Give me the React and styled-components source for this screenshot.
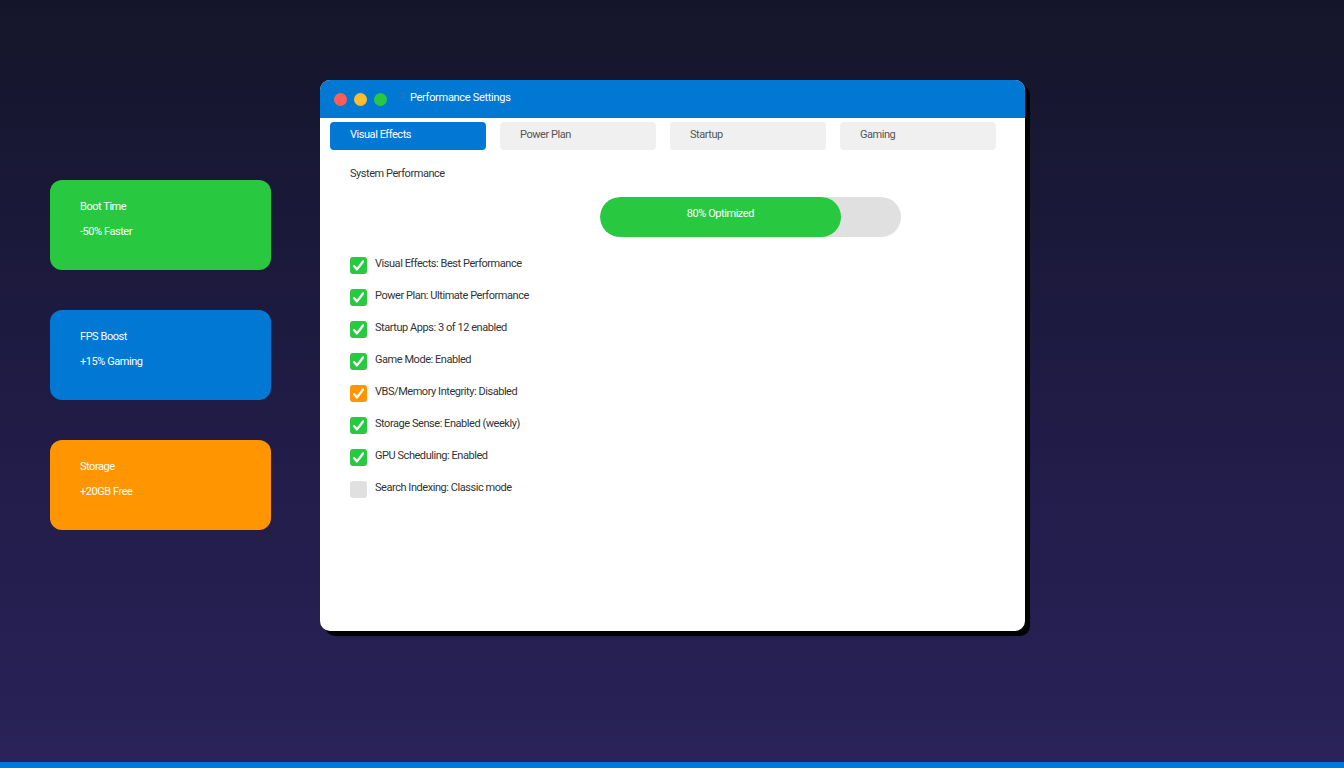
import React from "react"
import styled, { createGlobalStyle } from "styled-components"

const GlobalStyle = createGlobalStyle`
  html, body { margin: 0; padding: 0; }
  body {
    font-family: Roboto, "Liberation Sans", sans-serif;
    background: #16152b;
    -webkit-font-smoothing: antialiased;
  }
`

const Page = styled.div`
  position: relative;
  width: 1344px;
  height: 768px;
  overflow: hidden;
  background: linear-gradient(180deg, #15152a 0%, #1f1b44 50%, #2a2259 100%);
  display: flex;
  align-items: flex-start;
  box-sizing: border-box;
  padding: 80px 0 0 50px;
  letter-spacing: -0.45px;
`

const BottomBar = styled.div`
  position: absolute;
  left: 0;
  right: 0;
  bottom: 0;
  height: 6px;
  background: #0078d4;
`

const StatColumn = styled.div`
  display: flex;
  flex-direction: column;
  gap: 40px;
  margin-top: 100px;
  width: 221px;
`

const StatCard = styled.div`
  height: 90px;
  border-radius: 12px;
  background: ${p => p.$color};
  color: #fff;
  box-sizing: border-box;
  padding: 20px 30px;
  font-size: 11px;
  display: flex;
  flex-direction: column;
  gap: 12px;
`

const Window = styled.div`
  margin-left: 49px;
  width: 705px;
  height: 551px;
  background: #fff;
  border-radius: 10px;
  box-shadow: 5px 5px 0 #000;
  overflow: hidden;
  display: flex;
  flex-direction: column;
`

const TitleBar = styled.div`
  height: 38px;
  background: #0078d4;
  display: flex;
  align-items: center;
  padding-left: 14px;
  color: #fff;
  font-size: 11px;
`

const Dot = styled.span`
  width: 13px;
  height: 13px;
  border-radius: 50%;
  background: ${p => p.$color};
  margin-right: 7px;
`

const Title = styled.span`
  margin-left: 16px;
  margin-top: -4px;
  letter-spacing: -0.3px;
`

const Tabs = styled.div`
  display: flex;
  gap: 14px;
  padding: 4px 10px 0;
`

const Tab = styled.div`
  width: 156px;
  height: 28px;
  box-sizing: border-box;
  border-radius: 4px;
  padding-left: 20px;
  display: flex;
  align-items: center;
  padding-bottom: 4px;
  font-size: 11px;
  background: ${p => (p.$active ? "#0078d4" : "#f0f0f0")};
  color: ${p => (p.$active ? "#fff" : "#555")};
`

const Content = styled.div`
  padding: 16px 30px 0;
  color: #333;
  font-size: 11px;
`

const SectionTitle = styled.div`
  height: 14px;
  line-height: 14px;
  margin-top: 1px;
`

const Progress = styled.div`
  margin: 16px 0 0 250px;
  width: 301px;
  height: 40px;
  border-radius: 20px;
  background: #e0e0e0;
  overflow: hidden;
`

const ProgressFill = styled.div`
  height: 100%;
  border-radius: 20px;
  background: #28c940;
  color: #fff;
  display: flex;
  align-items: center;
  justify-content: center;
  padding-bottom: 8px;
  box-sizing: border-box;
`

const CheckList = styled.div`
  display: flex;
  flex-direction: column;
  gap: 15px;
  margin-top: 20px;
`

const CheckRow = styled.div`
  display: flex;
  align-items: center;
  gap: 8px;
  height: 17px;
`

const Box = styled.span`
  width: 17px;
  height: 17px;
  border-radius: 3px;
  background: ${p => p.$color};
  display: flex;
  align-items: center;
  justify-content: center;
  flex-shrink: 0;
`

const Label = styled.span`
  margin-top: -5px;
`

const Check = () => (
  <svg width="13" height="13" viewBox="0 0 13 13">
    <path d="M2 7 L5 10.5 L11 2.5" fill="none" stroke="#fff" strokeWidth="2.2" strokeLinecap="round" strokeLinejoin="round" />
  </svg>
)

const stats = [
  { title: "Boot Time", value: "-50% Faster", color: "#28c940" },
  { title: "FPS Boost", value: "+15% Gaming", color: "#0078d4" },
  { title: "Storage", value: "+20GB Free", color: "#ff9500" },
]

const tabs = ["Visual Effects", "Power Plan", "Startup", "Gaming"]

const items = [
  { label: "Visual Effects: Best Performance", state: "on" },
  { label: "Power Plan: Ultimate Performance", state: "on" },
  { label: "Startup Apps: 3 of 12 enabled", state: "on" },
  { label: "Game Mode: Enabled", state: "on" },
  { label: "VBS/Memory Integrity: Disabled", state: "warn" },
  { label: "Storage Sense: Enabled (weekly)", state: "on" },
  { label: "GPU Scheduling: Enabled", state: "on" },
  { label: "Search Indexing: Classic mode", state: "off" },
]

const boxColors = { on: "#28c940", warn: "#ff9500", off: "#e0e0e0" }

export default function App() {
  const optimized = 80
  return (
    <>
      <GlobalStyle />
      <Page>
        <StatColumn>
          {stats.map(s => (
            <StatCard key={s.title} $color={s.color}>
              <span>{s.title}</span>
              <span>{s.value}</span>
            </StatCard>
          ))}
        </StatColumn>

        <Window>
          <TitleBar>
            <Dot $color="#ff5f57" />
            <Dot $color="#ffbd2e" />
            <Dot $color="#28c940" />
            <Title>Performance Settings</Title>
          </TitleBar>
          <Tabs>
            {tabs.map((t, i) => (
              <Tab key={t} $active={i === 0}>{t}</Tab>
            ))}
          </Tabs>
          <Content>
            <SectionTitle>System Performance</SectionTitle>
            <Progress>
              <ProgressFill style={{ width: `${optimized}%` }}>{optimized}% Optimized</ProgressFill>
            </Progress>
            <CheckList>
              {items.map(it => (
                <CheckRow key={it.label}>
                  <Box $color={boxColors[it.state]}>{it.state !== "off" && <Check />}</Box>
                  <Label>{it.label}</Label>
                </CheckRow>
              ))}
            </CheckList>
          </Content>
        </Window>
        <BottomBar />
      </Page>
    </>
  )
}
